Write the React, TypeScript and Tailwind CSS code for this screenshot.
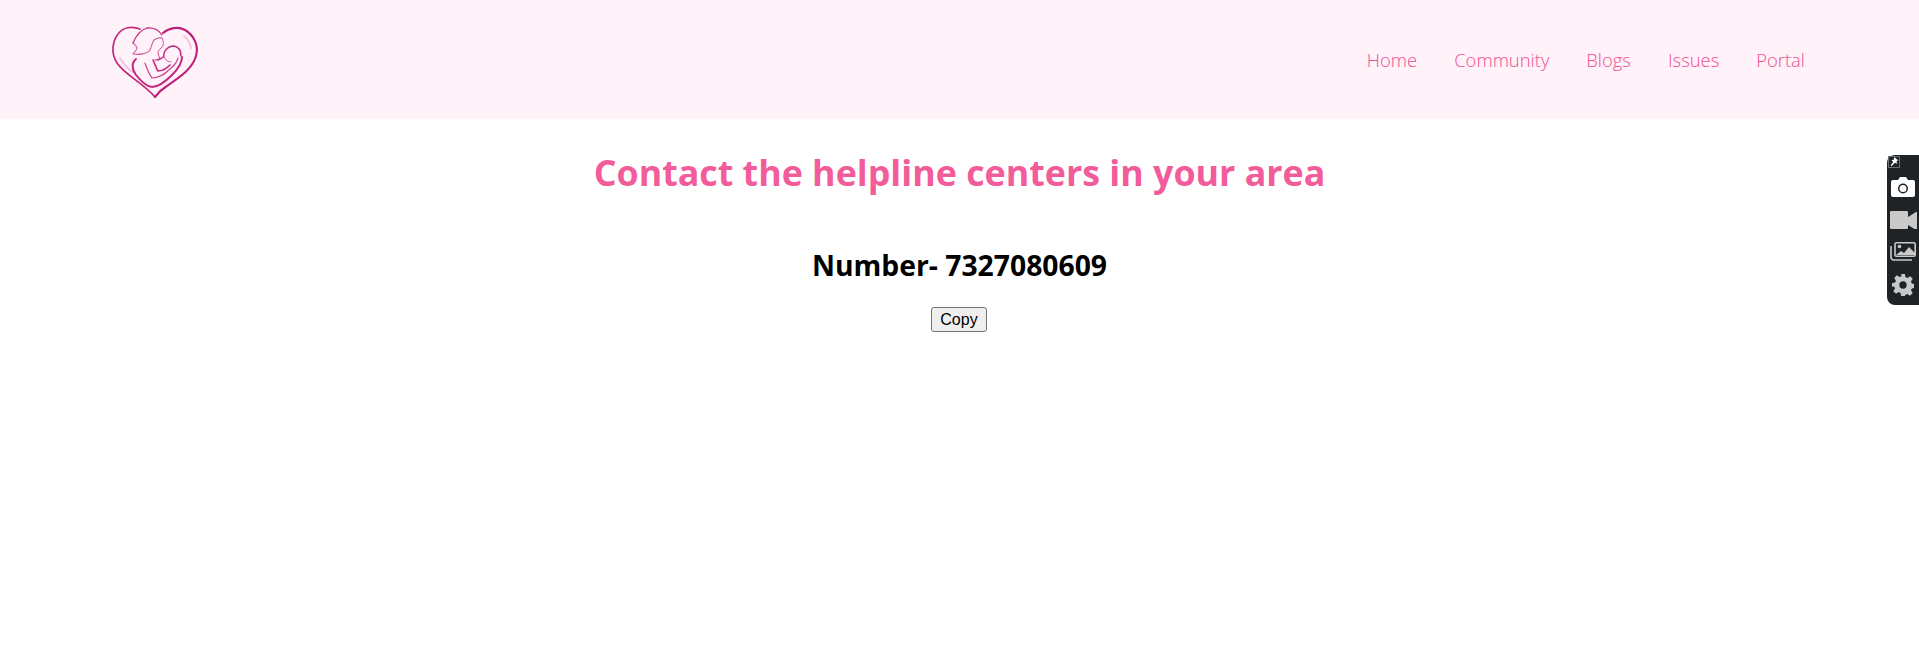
const links = ['Home', 'Community', 'Blogs', 'Issues', 'Portal']

const Logo = () => (
    <svg viewBox="0 0 130 100" className="w-[130px] h-[100px]" fill="none" strokeLinecap="round" strokeLinejoin="round">
        {/* heart */}
        <path d="M50 19 C42 16 33 17 28 24 C22 32 21 44 27 53 C35 65 52 72 65 87" stroke="#c2267f" strokeWidth="1.7" />
        <path d="M73 23 C79 18 88 16 95 20 C104 25 109 36 106 46 C102 60 88 68 77 76 C72 79 68 83 65 87" stroke="#bd1f79" strokeWidth="2.1" />
        <path d="M30 48 C33 54 38 59 44 63" stroke="#f5c3dc" strokeWidth="1.8" />
        <path d="M94 26 C98 29 100 33 101 38" stroke="#f5c3dc" strokeWidth="1.8" />
        {/* mother hair and face */}
        <path d="M43 33 C46 26 50 20 57 18 C63 17 69 20 72 25" stroke="#c2267f" strokeWidth="1.3" />
        <path d="M43 33 C47 36 49 38 43 44 C49 45 57 44 60 40 C62 36 62 32 64 30 C67 28 70 27 72 28" stroke="#d45a9f" strokeWidth="1.1" />
        <path d="M72 28 C74 32 74 36 71 38 C69 40 68 41 68 43 C69 46 70 48 69 50" stroke="#cf4a95" strokeWidth="1" />
        {/* body and arms */}
        <path d="M46 49 C41 53 42 60 46 65 C51 71 57 77 62 77 C68 77 76 71 82 65 C88 59 92 53 92 47" stroke="#c2267f" strokeWidth="2" />
        <path d="M55 53 C57 59 59 64 62 68 C68 68 75 64 80 59 C84 56 87 52 88 48" stroke="#cc4392" strokeWidth="1.2" />
        <path d="M63 50 C65 54 66 58 68 61 C72 61 77 58 80 55" stroke="#c2267f" strokeWidth="1.6" />
        {/* baby */}
        <path d="M74 47 C73 41 78 36 84 36 C89 37 91 41 91 46" stroke="#c2267f" strokeWidth="1.4" />
        <path d="M74 47 C75 50 78 52 81 52" stroke="#d45a9f" strokeWidth="1" />
        <path d="M73 47 C71 49 68 50 65 50" stroke="#c2267f" strokeWidth="1.2" />
    </svg>
)

const CameraIcon = () => (
    <svg viewBox="0 0 24 20" className="w-[24px] h-[20px]">
        <path fillRule="evenodd" fill="#ffffff" d="M2 3h5l2-3h6l2 3h5a2 2 0 0 1 2 2v13a2 2 0 0 1-2 2H2a2 2 0 0 1-2-2V5a2 2 0 0 1 2-2zM12 6.500a5 5 0 1 0 0 10a5 5 0 0 0 0-10zM12 8a3.500 3.500 0 1 1 0 7a3.500 3.500 0 0 1 0-7z" />
    </svg>
)

const VideoIcon = () => (
    <svg viewBox="0 0 27 18" className="w-[27px] h-[18px]">
        <path fill="#c9c9c9" d="M1 0h16a1 1 0 0 1 1 1v5l8-5h1v18h-1l-8-5v3a1 1 0 0 1-1 1H1a1 1 0 0 1-1-1V1a1 1 0 0 1 1-1z" />
    </svg>
)

const GalleryIcon = () => (
    <svg viewBox="0 0 26 20" className="w-[26px] h-[20px]">
        <path fill="none" stroke="#c9c9c9" strokeWidth="1.6" d="M1 4v11a3 3 0 0 0 3 3h18" />
        <rect x="5" y="0.8" width="20.2" height="13.4" rx="1.5" fill="none" stroke="#c9c9c9" strokeWidth="1.6" />
        <circle cx="9.5" cy="4.5" r="1.8" fill="#c9c9c9" />
        <path fill="#c9c9c9" d="M6 13l5-4 3 2 5-6 6 6v2z" />
    </svg>
)

const GearIcon = () => (
    <svg viewBox="0 0 24 24" className="w-[22px] h-[22px]">
        <path fillRule="evenodd" fill="#c9c9c9" d="M10 0h4l.7 3.400 2 .9 3-1.900 2.900 2.900-1.900 3 .9 2 3.400.7v4l-3.400.7-.9 2 1.900 3-2.900 2.900-3-1.900-2 .9L14 24h-4l-.7-3.400-2-.9-3 1.900-2.900-2.900 1.900-3-.9-2L0 14v-4l3.400-.7.9-2-1.900-3 2.900-2.900 3 1.900 2-.9zM12 8a4 4 0 1 0 0 8a4 4 0 0 0 0-8z" />
    </svg>
)

const PinIcon = () => (
    <svg viewBox="0 0 12 12" className="w-[10px] h-[10px]">
        <path fill="#ffffff" d="M6 0l5 4-2 1 1 3-3-1-4 4-1-1 3-4-2-2 3-1z" />
    </svg>
)

export default function App() {
    return (
        <div className="relative h-[652px] overflow-hidden bg-white font-['Open_Sans','Noto_Sans',sans-serif]">
            <nav className="flex items-center justify-between h-[119px] bg-[#fff2f8] pl-[90px] pr-[114px]">
                <Logo />
                <ul className="flex items-center gap-[37px] text-[18.4px] font-light text-[#f04e92]">
                    {links.map(link => (
                        <li key={link}>{link}</li>
                    ))}
                </ul>
            </nav>

            <main className="flex flex-col items-center">
                <h1 className="mt-[29px] text-[35.8px] leading-[48px] font-bold text-[#f25c9a]">
                    Contact the helpline centers in your area
                </h1>
                <h2 className="mt-[49px] text-[28.3px] leading-[40px] font-bold text-black">
                    Number- 7327080609
                </h2>
                <button className="mt-[22px] mr-[1px] h-[25px] w-[56px] rounded-[3px] border border-[#767676] bg-[#efefef] text-[16px] leading-none text-black font-['Liberation_Sans',sans-serif]">
                    Copy
                </button>
            </main>

            <div className="absolute right-0 top-[155px] flex h-[150px] w-[32px] flex-col items-center rounded-l-[8px] bg-[#202326] pt-[22px]">
                <div className="absolute left-[1px] top-[1px] flex h-[12px] w-[12px] items-center justify-center border border-[#6b6f73]">
                    <PinIcon />
                </div>
                <CameraIcon />
                <div className="mt-[14px]"><VideoIcon /></div>
                <div className="mt-[13px]"><GalleryIcon /></div>
                <div className="mt-[12px]"><GearIcon /></div>
            </div>
        </div>
    )
}
